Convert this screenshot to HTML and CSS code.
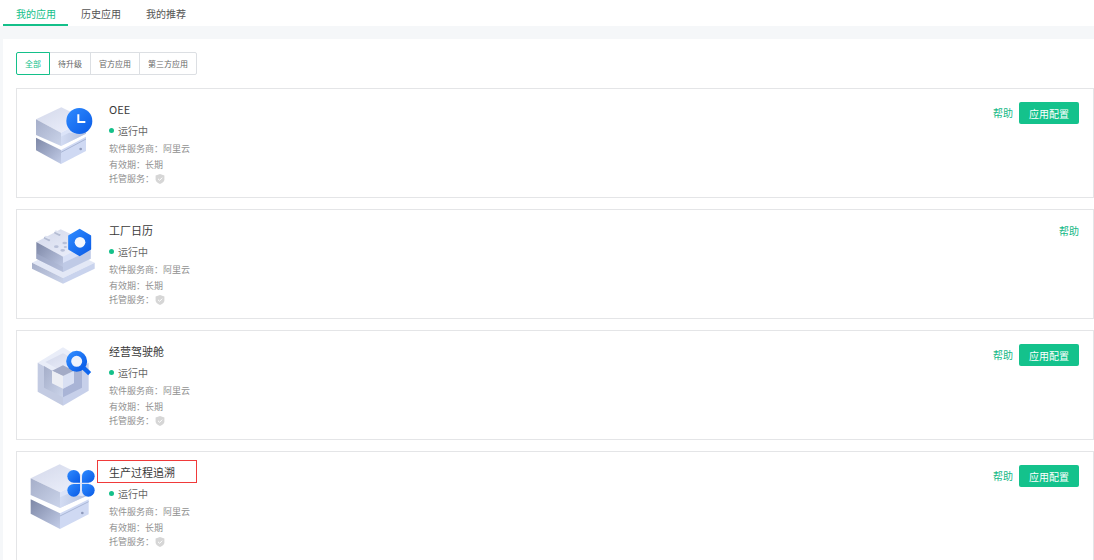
FILE: index.html
```html
<!DOCTYPE html>
<html lang="zh-CN">
<head>
    <meta charset="UTF-8">
    <meta name="viewport" content="width=device-width, initial-scale=1.0">
    <title>我的应用</title>
    <link rel="stylesheet" href="styles.css">
</head>
<body>
    <!-- shared gradients and the shield symbol -->
    <svg class="defs" aria-hidden="true">
        <defs>
            <linearGradient id="blue" x1="0" y1="0" x2="1" y2="1">
                <stop offset="0" stop-color="#2f8bff"/>
                <stop offset="1" stop-color="#0a5be6"/>
            </linearGradient>
            <linearGradient id="top" x1="0" y1="0" x2="1" y2="1">
                <stop offset="0" stop-color="#d3d8ea"/>
                <stop offset="1" stop-color="#eff2fd"/>
            </linearGradient>
            <linearGradient id="left" x1="0" y1="0" x2="1" y2="1">
                <stop offset="0" stop-color="#a5aec9"/>
                <stop offset="1" stop-color="#cbd4ea"/>
            </linearGradient>
            <linearGradient id="dark" x1="0" y1="0" x2="1" y2="1">
                <stop offset="0" stop-color="#7d87a6"/>
                <stop offset="1" stop-color="#c3cde8"/>
            </linearGradient>
            <linearGradient id="right" x1="0" y1="0" x2="1" y2="0">
                <stop offset="0" stop-color="#d3dcf3"/>
                <stop offset="1" stop-color="#b3bfdc"/>
            </linearGradient>
        </defs>
        <symbol id="shield" viewBox="0 0 10 10">
            <path d="M5 0 9.4 1.5V5.6Q9.4 8.2 5 10 .6 8.2 .6 5.6V1.5Z" fill="#d6d6d6"/>
            <path d="M3 4.8 4.6 6.3 7.2 3.7" fill="none" stroke="#fff"/>
        </symbol>
    </svg>

    <nav class="tabs">
        <a class="tab active" href="#mine">我的应用</a>
        <a class="tab" href="#history">历史应用</a>
        <a class="tab" href="#recommend">我的推荐</a>
    </nav>

    <main class="panel">
        <div class="filters">
            <button class="filter active" type="button">全部</button>
            <button class="filter" type="button">待升级</button>
            <button class="filter" type="button">官方应用</button>
            <button class="filter" type="button">第三方应用</button>
        </div>

        <div class="app-list">
            <section class="app-card">
                <svg class="app-icon" viewBox="0 12 240 216" aria-hidden="true">
                    <path d="M36 128 111 165V207L36 166Z" fill="url(#dark)"/>
                    <path d="M111 165 186 125V168L111 207Z" fill="#cfd9f3"/>
                    <path d="M111 172 186 132" stroke="#a9b6d6" stroke-width="3"/>
                    <path d="M36 73 112 37 186 73 111 113Z" fill="url(#top)"/>
                    <path d="M36 73 111 113V153L36 120Z" fill="url(#left)"/>
                    <path d="M111 113 186 73V116L111 153Z" fill="#dbe3f8"/>
                    <path d="M111 125 135 113 170 117 186 108V116L111 153Z" fill="url(#right)"/>
                    <circle cx="170" cy="162" r="4" fill="#8e9abb"/>
                    <circle cx="166" cy="78" r="39" fill="url(#blue)"/>
                    <path d="M163 58V81H184" fill="none" stroke="#fff" stroke-width="6"/>
                </svg>
                <div class="app-info">
                    <h2 class="app-name">OEE</h2>
                    <p class="app-status">运行中</p>
                    <p class="app-meta">软件服务商：阿里云</p>
                    <p class="app-meta">有效期：长期</p>
                    <p class="app-meta hosting">托管服务：<svg class="shield"><use href="#shield"/></svg></p>
                </div>
                <div class="app-actions">
                    <a class="help" href="#help">帮助</a>
                    <button class="config" type="button">应用配置</button>
                </div>
            </section>

            <section class="app-card">
                <svg class="app-icon" viewBox="0 6 240 216" aria-hidden="true">
                    <path d="M24 134 117 90 212 134 117 180Z" fill="#e3e8f6"/>
                    <path d="M24 134 117 180V197L24 152Z" fill="url(#left)"/>
                    <path d="M117 180 212 134V152L117 197Z" fill="#c9d3ed"/>
                    <path d="M37 72 110 34 200 76 117 116Z" fill="url(#top)"/>
                    <path d="M37 72 117 116V162L37 122Z" fill="url(#dark)"/>
                    <path d="M37 106 117 147V162L37 122Z" fill="#a7b2d0" opacity=".5"/>
                    <path d="M117 116 200 76V122L117 162Z" fill="#d9e1f7"/>
                    <path d="M117 135 200 96V122L117 162Z" fill="#bfcae6"/>
                    <path d="M63 60 75 66M94 44 106 50" stroke="#b4bcd3" stroke-width="7" stroke-linecap="round"/>
                    <path d="M65 56 76 61M96 40 107 45" stroke="#dfe4f2" stroke-width="6" stroke-linecap="round"/>
                    <g fill="#b9c1d9">
                        <ellipse cx="97" cy="86" rx="7" ry="4"/>
                        <ellipse cx="122" cy="75" rx="7" ry="4"/>
                        <ellipse cx="116" cy="97" rx="7" ry="4"/>
                        <ellipse cx="124" cy="87" rx="5" ry="3"/>
                    </g>
                    <path d="M167 35 199 54V93L167 112 135 93V54Z" fill="url(#blue)" stroke="url(#blue)" stroke-width="5" stroke-linejoin="round"/>
                    <circle cx="168" cy="73" r="16" fill="#f4f7fe"/>
                </svg>
                <div class="app-info">
                    <h2 class="app-name">工厂日历</h2>
                    <p class="app-status">运行中</p>
                    <p class="app-meta">软件服务商：阿里云</p>
                    <p class="app-meta">有效期：长期</p>
                    <p class="app-meta hosting">托管服务：<svg class="shield"><use href="#shield"/></svg></p>
                </div>
                <div class="app-actions">
                    <a class="help" href="#help">帮助</a>
                </div>
            </section>

            <section class="app-card">
                <svg class="app-icon" viewBox="0 3 240 216" aria-hidden="true">
                    <path d="M41 68 117 22 194 68 117 110Z" fill="#e9edf8"/>
                    <path d="M64 66 117 40 172 68 117 96Z" fill="url(#top)"/>
                    <path d="M41 68 117 110V197L41 155Z" fill="#c3cbe2"/>
                    <path d="M60 78 84 92V130L117 146V172L60 143Z" fill="url(#left)"/>
                    <path d="M117 110 194 68V152L117 197Z" fill="#c7d0ea"/>
                    <path d="M117 146 150 129V92L174 79V143L117 172Z" fill="#a9b4d6"/>
                    <path d="M117 108 150 92V129L117 146Z" fill="#d9e0f3"/>
                    <path d="M84 92 117 76 150 92 117 108Z" fill="#a3abc6"/>
                    <path d="M84 92 117 108V146L84 130Z" fill="#eceef4"/>
                    <circle cx="158" cy="64" r="24" fill="#eef2fc" stroke="url(#blue)" stroke-width="15"/>
                    <path d="M178 83 197 101" stroke="#0f66ee" stroke-width="13"/>
                </svg>
                <div class="app-info">
                    <h2 class="app-name">经营驾驶舱</h2>
                    <p class="app-status">运行中</p>
                    <p class="app-meta">软件服务商：阿里云</p>
                    <p class="app-meta">有效期：长期</p>
                    <p class="app-meta hosting">托管服务：<svg class="shield"><use href="#shield"/></svg></p>
                </div>
                <div class="app-actions">
                    <a class="help" href="#help">帮助</a>
                    <button class="config" type="button">应用配置</button>
                </div>
            </section>

            <section class="app-card">
                <svg class="app-icon" viewBox="0 21 240 216" aria-hidden="true">
                    <path d="M20 133 108 175V222L20 176Z" fill="url(#dark)"/>
                    <path d="M108 175 194 133V178L108 222Z" fill="#cfd9f3"/>
                    <path d="M108 183 194 140" stroke="#a9b6d6" stroke-width="3"/>
                    <path d="M20 70 107 28 194 70 108 112Z" fill="url(#top)"/>
                    <path d="M20 70 108 112V159L20 120Z" fill="url(#left)"/>
                    <path d="M108 112 194 70V120L108 159Z" fill="#dbe3f8"/>
                    <path d="M108 127 132 116 176 124 194 112V120L108 159Z" fill="url(#right)"/>
                    <circle cx="175" cy="174" r="4" fill="#8e9abb"/>
                    <g fill="url(#blue)">
                        <path d="M149 45A19 19 0 0 1 168 64V83H149A19 19 0 0 1 149 45Z"/>
                        <path d="M193 45A19 19 0 0 1 193 83H174V64A19 19 0 0 1 193 45Z"/>
                        <path d="M149 87H168V106A19 19 0 1 1 149 87Z"/>
                        <path d="M174 87H193A19 19 0 1 1 174 106Z"/>
                    </g>
                </svg>
                <div class="app-info">
                    <h2 class="app-name marked">生产过程追溯</h2>
                    <p class="app-status">运行中</p>
                    <p class="app-meta">软件服务商：阿里云</p>
                    <p class="app-meta">有效期：长期</p>
                    <p class="app-meta hosting">托管服务：<svg class="shield"><use href="#shield"/></svg></p>
                </div>
                <div class="app-actions">
                    <a class="help" href="#help">帮助</a>
                    <button class="config" type="button">应用配置</button>
                </div>
            </section>
        </div>
    </main>
</body>
</html>
```
FILE: styles.css
```css
*,
*::before,
*::after {
    margin: 0;
    padding: 0;
    box-sizing: border-box;
}

html {
    overflow: hidden;
}

body {
    background: #f5f7f9;
    color: #3a3a3a;
    font-family: "Noto Sans CJK SC", sans-serif;
    font-size: 10px;
    min-height: 100vh;
}

a {
    text-decoration: none;
}

button {
    font-family: inherit;
    cursor: pointer;
}

.defs {
    position: absolute;
    width: 0;
    height: 0;
}

.tabs {
    display: flex;
    background: #fff;
    padding-left: 3px;
}

.tab {
    padding: 4px 12px 0 13px;
    height: 26px;
    line-height: 20px;
    color: #555;
    border-bottom: 2px solid transparent;
}

.tab.active {
    color: #14c08a;
    border-bottom-color: #14c08a;
}

.panel {
    margin: 13px 0 0 3px;
    padding: 13px 0 13px 13px;
    background: #fff;
}

.filters {
    display: flex;
    margin-bottom: 13px;
}

.filter {
    height: 23px;
    padding: 0 8px;
    margin-left: -1px;
    background: #fff;
    border: 1px solid #dcdfe3;
    color: #666;
    font-size: 8px;
}

.filter:first-child {
    margin-left: 0;
    border-radius: 2px 0 0 2px;
}

.filter:last-child {
    border-radius: 0 2px 2px 0;
}

.filter.active {
    position: relative;
    border-color: #14c08a;
    color: #14c08a;
}

.app-list {
    display: flex;
    flex-direction: column;
    gap: 11px;
}

.app-card {
    display: flex;
    align-items: flex-start;
    gap: 5px;
    padding: 10px 14px 12px 7px;
    border: 1px solid #e4e5e7;
    background: #fff;
}

.app-icon {
    width: 80px;
    height: 72px;
    flex: none;
}

.app-info {
    flex: 1;
}

.app-name {
    font-size: 11px;
    font-weight: 400;
    line-height: 21px;
}

/* red frame around the name */
.app-name.marked {
    position: relative;
}

.app-name.marked::after {
    content: "";
    position: absolute;
    top: -2px;
    left: -12px;
    width: 100px;
    height: 23px;
    border: 1px solid #f03a3a;
}

.app-status {
    display: flex;
    align-items: center;
    gap: 4px;
    line-height: 21px;
    color: #666;
}

.app-status::before {
    content: "";
    width: 5px;
    height: 5px;
    border-radius: 50%;
    background: #14c08a;
}

.app-meta {
    font-size: 9px;
    line-height: 16px;
    color: #909090;
}

.app-meta.hosting {
    display: flex;
    align-items: center;
    gap: 1px;
    line-height: 12px;
}

.shield {
    width: 10px;
    height: 10px;
}

.app-actions {
    display: flex;
    align-items: center;
    gap: 6px;
    padding-top: 3px;
}

.help {
    line-height: 16px;
    color: #14b886;
}

.config {
    width: 60px;
    height: 22px;
    border: 0;
    border-radius: 2px;
    background: #14c28c;
    color: #fff;
    font-size: 10px;
}
```
